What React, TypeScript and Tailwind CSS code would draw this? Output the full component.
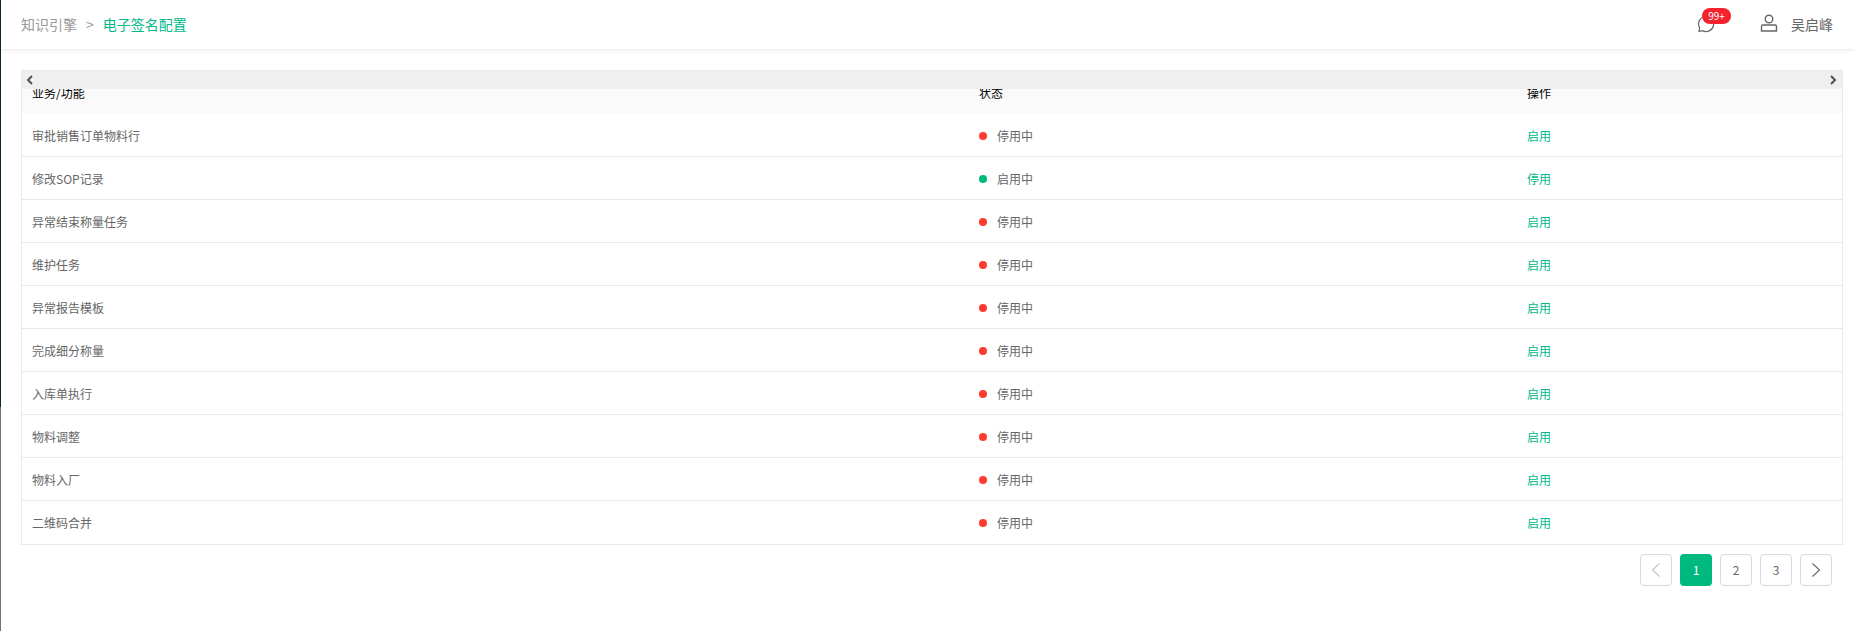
const rows = [
  { name: "审批销售订单物料行", on: false },
  { name: "修改SOP记录", on: true },
  { name: "异常结束称量任务", on: false },
  { name: "维护任务", on: false },
  { name: "异常报告模板", on: false },
  { name: "完成细分称量", on: false },
  { name: "入库单执行", on: false },
  { name: "物料调整", on: false },
  { name: "物料入厂", on: false },
  { name: "二维码合并", on: false },
];

const cols = "grid grid-cols-[947px_548px_1fr]";

function Arrow({ right }: { right?: boolean }) {
  return (
    <svg width="8" height="10" viewBox="0 0 8 10" fill="none" stroke="#505050" strokeWidth="2">
      <path d={right ? "M2 1l4 4-4 4" : "M6 1L2 5l4 4"} />
    </svg>
  );
}

function PageArrow({ right }: { right?: boolean }) {
  return (
    <svg width="10" height="14" viewBox="0 0 10 14" fill="none" stroke="currentColor" strokeWidth="1.1">
      <path d={right ? "M1.5 0.5L8.5 7l-7 6.5" : "M8.5 0.5L1.5 7l7 6.5"} />
    </svg>
  );
}

export default function App() {
  return (
    <div className="flex h-[631px] w-[1854px] overflow-hidden bg-white font-['Noto_Sans_CJK_SC',sans-serif] text-xs text-[#666]">
      <div className="flex w-px shrink-0 flex-col">
        <div className="h-[407px] bg-[#0f2a24]" />
        <div className="flex-1 bg-[#6b7575]" />
      </div>
      <div className="flex min-w-0 flex-1 flex-col">
        <header className="flex h-[49px] shrink-0 items-center justify-between pb-[2px] pl-5 pr-[21px] shadow-[0_1px_4px_rgba(0,0,0,0.1)]">
          <div className="flex items-center text-sm">
            <span className="text-[#999]">知识引擎</span>
            <span className="ml-[9px] text-[#999]">&gt;</span>
            <span className="ml-[9px] text-[#00b88a]">电子签名配置</span>
          </div>
          <div className="flex items-center text-sm">
            <div className="relative mr-[46px] h-[17px] w-[17px]">
              <svg width="18" height="18" viewBox="0 0 18 18" fill="none" stroke="#666" strokeWidth="1.2">
                <path d="M9 1.5a7.5 7.5 0 0 0-6.3 11.5L2 16.5l3.6-.9A7.5 7.5 0 1 0 9 1.5z" />
              </svg>
              <span className="absolute left-[5px] top-[-7px] flex h-4 w-[29px] items-center justify-center rounded-full bg-[#f5222d] text-[10px] leading-none text-white">
                99+
              </span>
            </div>
            <svg className="mb-[2px] mr-[13px]" width="18" height="18" viewBox="0 0 18 18" fill="none" stroke="#666" strokeWidth="1.4">
              <circle cx="9" cy="5" r="3.8" />
              <path d="M1.5 12.5a1.5 1.5 0 0 1 1.5-1.5h12a1.5 1.5 0 0 1 1.5 1.5V17h-15z" />
            </svg>
            <span className="text-[#666]">吴启峰</span>
          </div>
        </header>

        <main className="flex flex-1 flex-col pl-5 pr-[11px] pt-[21px]">
          <div className="border border-[#e8e8e8]">
            <div className="flex h-[18px] items-center justify-between bg-[#efefef] pl-1 pr-[5px]">
              <Arrow />
              <Arrow right />
            </div>
            <div className={`${cols} h-[25px] overflow-hidden bg-[#fafafa] text-black`}>
              <div className="-mt-[6px] pl-[10px] leading-5">业务/功能</div>
              <div className="-mt-[6px] pl-[10px] leading-5">状态</div>
              <div className="-mt-[6px] pl-[10px] leading-5">操作</div>
            </div>
            {rows.map((row, i) => (
              <div
                key={row.name}
                className={`${cols} h-[43px] items-center pt-px ${i < rows.length - 1 ? "border-b border-[#e8e8e8]" : ""}`}
              >
                <div className="pl-[10px]">{row.name}</div>
                <div className="flex items-center pl-[10px]">
                  <span className={`h-2 w-2 rounded-full ${row.on ? "bg-[#00b97f]" : "bg-[#ff3b30]"}`} />
                  <span className="ml-[10px]">{row.on ? "启用中" : "停用中"}</span>
                </div>
                <div className="pl-[10px] text-[#00b88a]">{row.on ? "停用" : "启用"}</div>
              </div>
            ))}
          </div>

          <div className="mt-[9px] flex justify-end gap-2 pr-[11px]">
            <button className="flex h-8 w-8 items-center justify-center rounded-sm border border-[#d5d8e2] text-[#c4c4c4]">
              <PageArrow />
            </button>
            <button className="flex h-8 w-8 items-center justify-center rounded-sm bg-[#00b97f] text-white">1</button>
            <button className="flex h-8 w-8 items-center justify-center rounded-sm border border-[#d5d8e2]">2</button>
            <button className="flex h-8 w-8 items-center justify-center rounded-sm border border-[#d5d8e2]">3</button>
            <button className="flex h-8 w-8 items-center justify-center rounded-sm border border-[#d5d8e2] text-[#666]">
              <PageArrow right />
            </button>
          </div>
        </main>
      </div>
    </div>
  );
}
